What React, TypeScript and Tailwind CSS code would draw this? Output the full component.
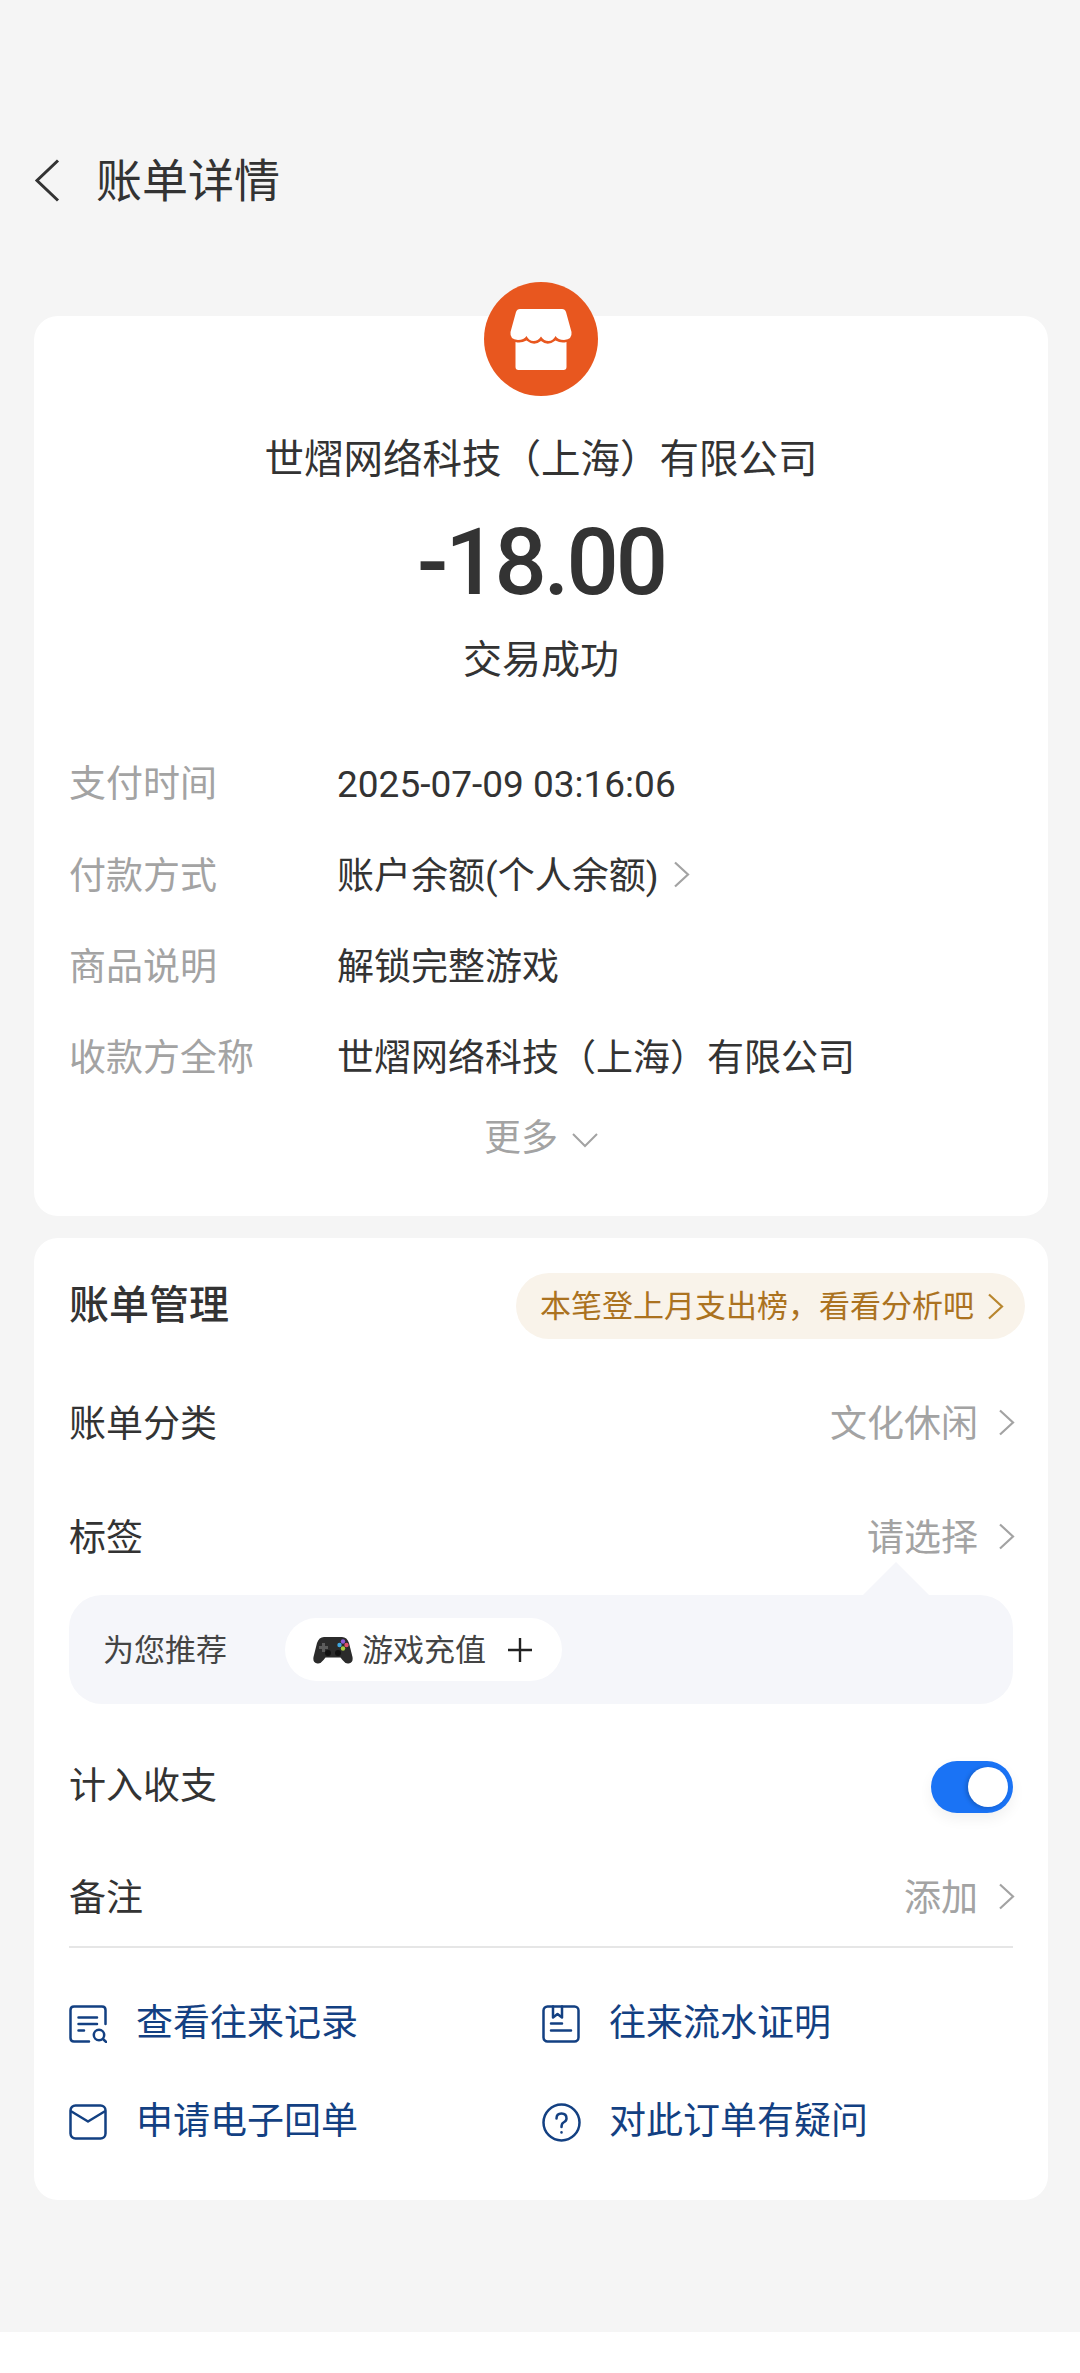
const cjk = "font-['Noto_Sans_CJK_SC',sans-serif]";

const details = [
  { label: "支付时间", value: "2025-07-09 03:16:06" },
  { label: "付款方式", value: "账户余额(个人余额)", more: true },
  { label: "商品说明", value: "解锁完整游戏" },
  { label: "收款方全称", value: "世熠网络科技（上海）有限公司" },
];

const actions = [
  { icon: <LogIcon />, text: "查看往来记录" },
  { icon: <LedgerIcon />, text: "往来流水证明" },
  { icon: <MailIcon />, text: "申请电子回单" },
  { icon: <HelpIcon />, text: "对此订单有疑问" },
];

function Arrow({ color = "#a3a3a3" }: { color?: string }) {
  return (
    <svg viewBox="0 0 17 27" className="w-[17px] h-[27px] shrink-0" fill="none" stroke={color} strokeWidth="2.2">
      <path d="M2 1.500l13 12-13 12" />
    </svg>
  );
}

function StoreBadge() {
  return (
    <svg viewBox="0 0 114 114" className="w-[114px] h-[114px]">
      <circle cx="57" cy="57" r="57" fill="#e8571f" />
      <path
        fill="#fff"
        d="M36 27H78Q81 27 82 30L87.500 50Q88.500 57.500 80 58Q74 58 71.500 54Q69 59 64.500 59Q60 59 57 54.500Q54 59 49.500 59Q45 59 42.500 54Q40 58 34 58Q25.500 57.500 26.500 50L32 30Q33 27 36 27Z"
      />
      <path
        fill="#fff"
        d="M31.500 60Q37 61.500 42.500 58.500Q50 64.500 57 59Q64 64.500 71.500 58.500Q77 61.500 82.500 60V85Q82.500 88 79.500 88H34.500Q31.500 88 31.500 85Z"
      />
    </svg>
  );
}

function GamepadEmoji() {
  return (
    <svg viewBox="0 0 40 28" className="w-[40px] h-[28px] shrink-0">
      <path
        fill="#2b2b2b"
        d="M11 1h18q5 0 7 6l3.500 14q1 6-4 6.500-3 .5-6-3.500l-2-2.500H12.500l-2 2.500q-3 4-6 3.500-5-.5-4-6.500L4 7q2-6 7-6Z"
      />
      <path fill="#5c5c5c" d="M9 7h3v3h3v3h-3v3H9v-3H6v-3h3Z" />
      <circle cx="15" cy="17" r="3" fill="#111" />
      <circle cx="25" cy="17" r="3" fill="#111" />
      <circle cx="30" cy="5.500" r="2.200" fill="#8e5bd6" />
      <circle cx="26.500" cy="9" r="2.200" fill="#3fa7e0" />
      <circle cx="33.500" cy="9" r="2.200" fill="#e0506a" />
      <circle cx="30" cy="12.500" r="2.200" fill="#a5c93d" />
    </svg>
  );
}

function LogIcon() {
  return (
    <svg viewBox="0 0 38 38" className="w-[38px] h-[38px]" fill="none" stroke="#134082" strokeWidth="2.500" strokeLinecap="round">
      <path d="M36.500 19V5Q36.500 1.500 33 1.500H5Q1.500 1.500 1.500 5V33Q1.500 36.500 5 36.500H20" />
      <path d="M9.500 12.500H28M9.500 19H28M9.500 25.500H15" />
      <circle cx="30" cy="30" r="5.200" />
      <path d="M34 34l3.200 3" />
    </svg>
  );
}

function LedgerIcon() {
  return (
    <svg viewBox="0 0 38 38" className="w-[38px] h-[38px]" fill="none" stroke="#134082" strokeWidth="2.500" strokeLinecap="round" strokeLinejoin="round">
      <rect x="1.500" y="1.500" width="35" height="35" rx="4" />
      <path d="M11 1.500V12.500L15.500 9 20 12.500V1.500M9 18.500H20M9 25.500H29" />
    </svg>
  );
}

function MailIcon() {
  return (
    <svg viewBox="0 0 38 36" className="w-[38px] h-[36px]" fill="none" stroke="#134082" strokeWidth="2.500" strokeLinecap="round" strokeLinejoin="round">
      <rect x="1.500" y="1.500" width="35" height="33" rx="5" />
      <path d="M2.500 7.500L19 17.500 35.500 7.500" />
    </svg>
  );
}

function HelpIcon() {
  return (
    <svg viewBox="0 0 39 39" className="w-[39px] h-[39px]" fill="none" stroke="#134082" strokeWidth="2.500" strokeLinecap="round" strokeLinejoin="round">
      <circle cx="19.500" cy="19.500" r="18" />
      <path d="M14.500 15.500Q14.500 10.500 19.500 10.500T24.500 15.500Q24.500 18 21.500 19.500 19.500 20.500 19.500 24" />
      <path d="M19.500 29.200v.3" />
    </svg>
  );
}

function ManageRow({ label, value, className = "" }: { label: string; value: string; className?: string }) {
  return (
    <div className={`flex items-center justify-between h-[96px] pl-[35px] pr-[33px] ${className}`}>
      <span className="text-[37px] text-[#333]">{label}</span>
      <span className="flex items-center gap-[20px] text-[37px] text-[#a3a3a3]">
        {value}
        <Arrow />
      </span>
    </div>
  );
}

export default function App() {
  return (
    <div className={`w-[1080px] h-[2373px] bg-white overflow-hidden ${cjk}`}>
      <div className="h-[2332px] bg-[#f5f5f5] overflow-hidden">
        {/* Header */}
        <div className="h-[316px] pt-[148px]">
          <div className="flex items-center h-[64px] pl-[34px]">
            <svg viewBox="0 0 26 43" className="w-[26px] h-[43px] shrink-0" fill="none" stroke="#333" strokeWidth="3">
              <path d="M24 1.500L3 21.500l21 20" />
            </svg>
            <span className="ml-[36px] mb-[6px] text-[46px] text-[#333]">账单详情</span>
          </div>
        </div>

        {/* Transaction summary */}
        <div className="relative ml-[34px] w-[1014px] h-[900px] bg-white rounded-[24px]">
          <div className="absolute left-1/2 -translate-x-1/2 -top-[34px]">
            <StoreBadge />
          </div>
          <div className="pt-[112px] text-center text-[39.500px] leading-[56px] text-[#333]">
            世熠网络科技（上海）有限公司
          </div>
          <div className="mt-[29px] text-center text-[92px] leading-[100px] tracking-[-3px] font-medium text-[#333] font-['Roboto',sans-serif]">
            -18.00
          </div>
          <div className="mt-[15px] text-center text-[39px] leading-[56px] text-[#333]">交易成功</div>
          <div className="mt-[54px] pl-[35px]">
            {details.map((row) => (
              <div key={row.label} className="flex items-center h-[91.3px]">
                <div className="flex items-baseline">
                  <span className="w-[268px] text-[37px] text-[#a3a3a3] shrink-0">{row.label}</span>
                  <span className="text-[37px] text-[#333] font-['Roboto','Noto_Sans_CJK_SC',sans-serif]">{row.value}</span>
                  {row.more && (
                    <span className="ml-[14px] self-center">
                      <Arrow />
                    </span>
                  )}
                </div>
              </div>
            ))}
          </div>
          <div className="flex items-center justify-center gap-[14px] mt-[5px] h-[56px] text-[37px] text-[#a3a3a3]">
            更多
            <svg viewBox="0 0 26 15" className="w-[26px] h-[15px] mt-[8px]" fill="none" stroke="#a3a3a3" strokeWidth="2">
              <path d="M1 1l12 12L25 1" />
            </svg>
          </div>
        </div>

        {/* Bill management */}
        <div className="mt-[22px] ml-[34px] w-[1014px] h-[962px] bg-white rounded-[24px]">
          <div className="flex items-center justify-between h-[136px] pl-[35px] pr-[23px]">
            <span className="mb-[8px] text-[40px] font-medium text-[#333]">账单管理</span>
            <span className="flex items-center h-[66px] pl-[24px] pr-[21px] gap-[13px] rounded-full bg-[#f9f3ea] text-[31px] text-[#ab7220]">
              <span className="mb-[4px]">本笔登上月支出榜，看看分析吧</span>
              <Arrow color="#b8862f" />
            </span>
          </div>
          <ManageRow label="账单分类" value="文化休闲" />
          <ManageRow label="标签" value="请选择" className="mt-[18px]" />

          {/* Tag suggestion bubble */}
          <div className="relative ml-[35px] w-[944px] mt-[11px] h-[109px] bg-[#f5f6fa] rounded-[33px] flex items-center pl-[34px]">
            <div className="absolute -top-[33px] right-[84px] w-0 h-0 border-l-[33px] border-r-[33px] border-b-[33px] border-l-transparent border-r-transparent border-b-[#f5f6fa]" />
            <span className="w-[182px] mb-[2px] text-[31px] text-[#444]">为您推荐</span>
            <span className="flex items-center h-[63px] w-[277px] pl-[28px] rounded-full bg-white text-[31px] text-[#444]">
              <GamepadEmoji />
              <span className="ml-[9px] mb-[2px]">游戏充值</span>
              <svg viewBox="0 0 24 24" className="ml-[22px] w-[24px] h-[24px]" fill="none" stroke="#222" strokeWidth="2.400">
                <path d="M12 0v24M0 12h24" />
              </svg>
            </span>
          </div>

          <div className="flex items-center justify-between h-[96px] mt-[35px] pl-[35px] pr-[35px]">
            <span className="mb-[6px] text-[37px] text-[#333]">计入收支</span>
            <span className="flex items-center justify-end w-[82px] h-[52px] pr-[5px] rounded-full bg-[#1a73f5] shadow-[0_6px_14px_rgba(0,0,0,0.06)]">
              <span className="w-[40px] h-[40px] rounded-full bg-white shadow-[-2px_1px_4px_rgba(0,0,0,0.2)]" />
            </span>
          </div>
          <ManageRow label="备注" value="添加" className="mt-[13px]" />
          <div className="ml-[35px] w-[944px] mt-[2px] border-t-2 border-[#e6e6e6]" />

          {/* Shortcuts */}
          <div className="grid grid-cols-[473px_1fr] pl-[35px] pt-[27px]">
            {actions.map((item) => (
              <div key={item.text} className="flex items-center h-[98px] text-[37px] text-[#134082]">
                <span className="flex items-center w-[67px] shrink-0">{item.icon}</span>
                <span className="mb-[6px]">{item.text}</span>
              </div>
            ))}
          </div>
        </div>
      </div>
    </div>
  );
}
